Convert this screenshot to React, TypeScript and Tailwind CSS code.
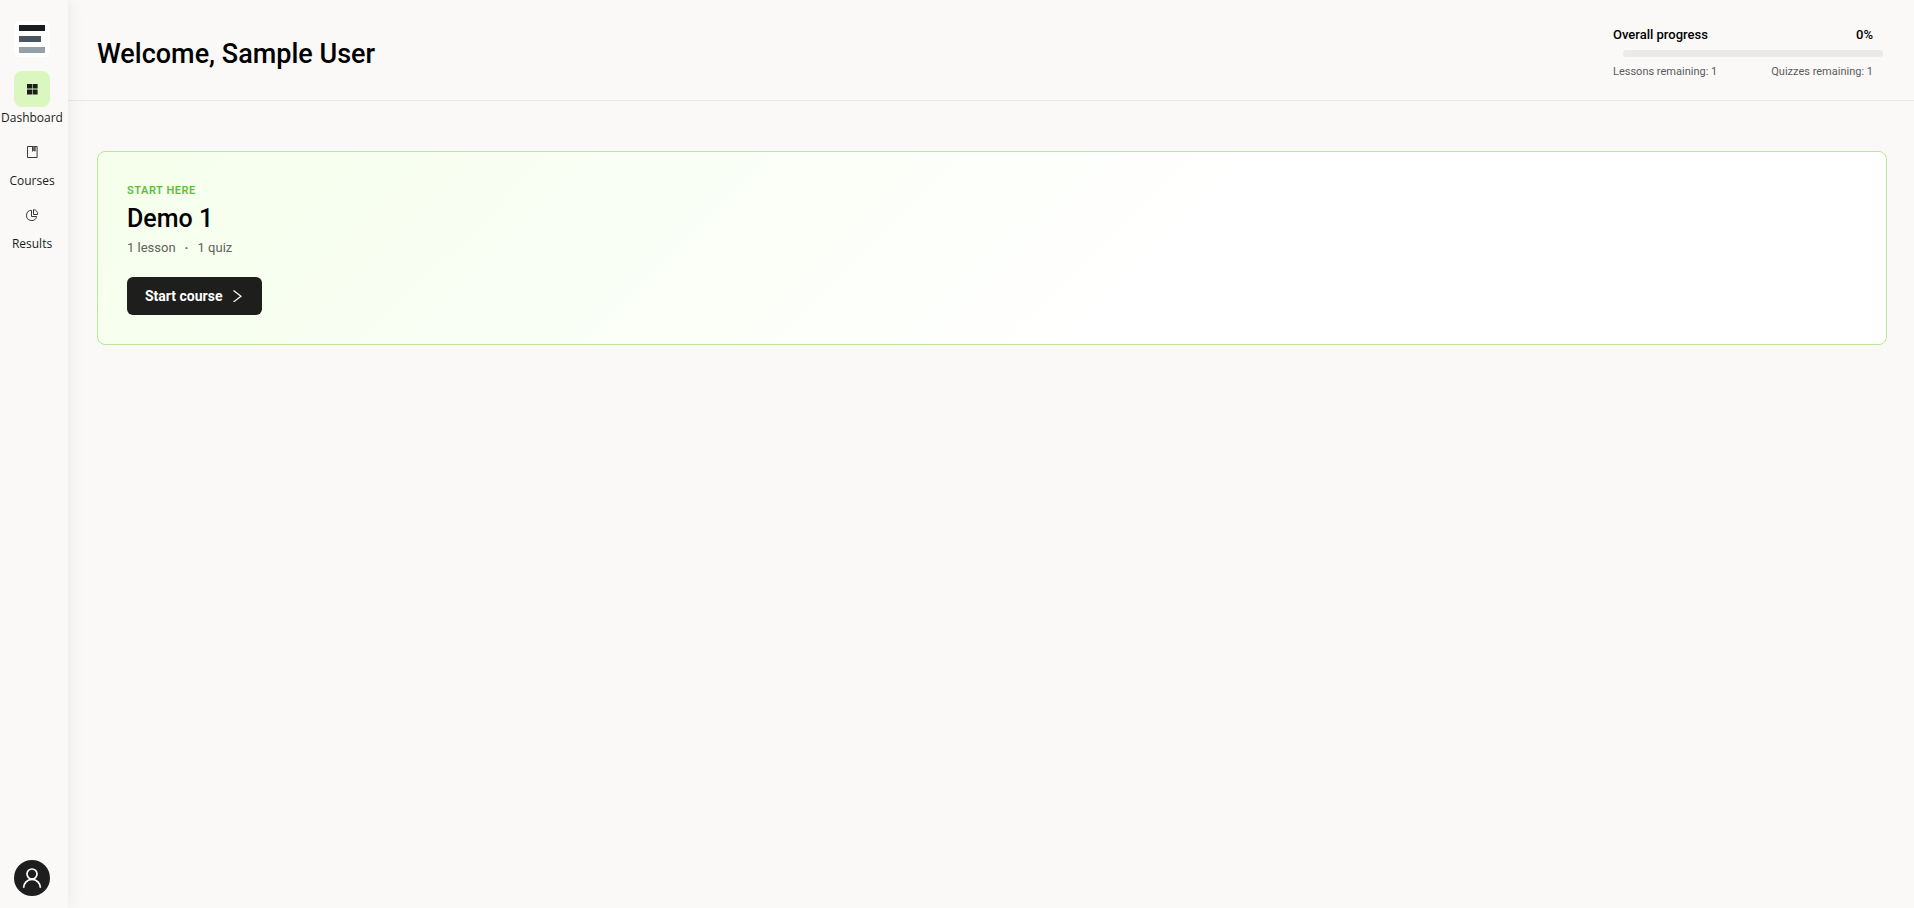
const navItems = [
  { label: 'Dashboard', href: '#dashboard', active: true },
  { label: 'Courses', href: '#courses', active: false },
  { label: 'Results', href: '#results', active: false },
];

function NavIcon({ name }: { name: string }) {
  if (name === 'Dashboard') {
    return (
      <svg className="w-3 h-3" viewBox="0 0 12 12" fill="#1c1c1c" aria-hidden="true">
        <path d="M1 1h5v4.6H1zM6.6 1h5v4.6h-5zM1 6.4h5v5H1zM6.6 6.4h5v5h-5z" />
      </svg>
    );
  }
  if (name === 'Courses') {
    return (
      <svg className="w-3 h-3" viewBox="0 0 12 12" fill="none" stroke="#3a3a3a" aria-hidden="true">
        <path d="M1.5.5h9.6v11H1.5z" />
        <path d="M6.500.5v4.700l1.300-1.200 1.300 1.200V.5" fill="#777" />
      </svg>
    );
  }
  return (
    <svg className="w-3 h-3" viewBox="0 0 12 12" fill="none" stroke="#3a3a3a" aria-hidden="true">
      <path d="M5.5 1.300A5.100 5.100 0 1 0 10.600 7.500H5.500z" />
      <path d="M7.500.6V5.500h4A4.600 4.600 0 0 0 7.500.6z" />
    </svg>
  );
}

function Sidebar() {
  return (
    <aside className="relative z-10 flex w-[68px] shrink-0 flex-col items-center bg-[#faf9f8] pr-1 pt-[21px] pb-3 shadow-[0_0_16px_rgba(0,0,0,0.08)]">
      <a href="#home" aria-label="Home" className="flex h-9 w-9 items-center justify-center rounded-md bg-white">
        <svg className="h-9 w-9" viewBox="0 0 36 36" aria-hidden="true">
          <path d="M5 4h26v6H5z" fill="#1b1c20" />
          <path d="M5 15h22v6H5z" fill="#4a5660" />
          <path d="M5 26h26v6H5z" fill="#94a1a8" />
        </svg>
      </a>

      <nav className="mt-[14px] flex flex-col">
        {navItems.map((item) => (
          <a
            key={item.label}
            href={item.href}
            className="flex h-[63px] flex-col items-center text-[#1c1c1c]"
          >
            <span
              className={
                item.active
                  ? 'flex h-9 w-9 items-center justify-center rounded-lg bg-[#daf7bf]'
                  : 'flex h-9 w-9 items-center justify-center rounded-lg'
              }
            >
              <NavIcon name={item.label} />
            </span>
            <span className="mt-px font-['Open_Sans',sans-serif] text-xs leading-5">{item.label}</span>
          </a>
        ))}
      </nav>

      <button
        type="button"
        aria-label="Account"
        className="mt-auto flex h-9 w-9 items-center justify-center rounded-full bg-[#1e1e1e]"
      >
        <svg className="h-5 w-5" viewBox="0 0 20 20" fill="none" stroke="#fff" strokeWidth={1.7} aria-hidden="true">
          <circle cx="10" cy="6" r="5" />
          <path d="M1.6 19.8a8.4 8.4 0 0 1 16.8 0" />
        </svg>
      </button>
    </aside>
  );
}

function OverallProgress() {
  return (
    <div className="w-[260px]">
      <div className="flex justify-between text-[13px] font-medium leading-4 text-black">
        <span>Overall progress</span>
        <span>0%</span>
      </div>
      <div className="ml-[10px] mr-[-10px] mt-[7px] h-[7px] rounded-full bg-[#ebeae9]" />
      <div className="mt-[7px] flex justify-between text-[11px] leading-4 text-[#5c5c5c]">
        <span>Lessons remaining: 1</span>
        <span>Quizzes remaining: 1</span>
      </div>
    </div>
  );
}

export default function App() {
  return (
    <div className="flex min-h-screen bg-[#faf9f8] font-[Roboto,sans-serif] text-black">
      <Sidebar />

      <div className="flex-1">
        <header className="flex h-[101px] items-center justify-between border-b border-[#e8e7e6] pt-[7px] pl-[29px] pr-[41px]">
          <h1 className="text-[27px] font-medium leading-9">Welcome, Sample User</h1>
          <OverallProgress />
        </header>

        <main className="pl-[29px] pr-[27px] pt-[50px]">
          {/* Next course */}
          <section className="rounded-lg border border-[#b5ea8f] bg-[linear-gradient(135deg,#f5ffeb_0%,#ffffff_60%)] px-[29px] pt-[31px] pb-[29px]">
            <p className="text-[11px] font-semibold uppercase leading-4 tracking-wider text-[#5bc236]">Start here</p>
            <h2 className="mt-1 text-[25px] font-medium leading-8">Demo 1</h2>
            <p className="mt-[5px] flex gap-[9px] text-[13px] leading-4 text-[#616161]">
              <span>1 lesson</span>
              <span className="font-bold">·</span>
              <span>1 quiz</span>
            </p>
            <button
              type="button"
              className="mt-[21px] flex h-[38px] items-center gap-[10px] rounded-md bg-[#1e1e1c] px-[18px] text-[14px] font-bold text-white"
            >
              Start course
              <svg className="h-3 w-3" viewBox="0 0 12 12" fill="none" stroke="currentColor" strokeWidth={1.2} aria-hidden="true">
                <path d="M1.5.5 9 6.2 1.5 12" />
              </svg>
            </button>
          </section>
        </main>
      </div>
    </div>
  );
}
